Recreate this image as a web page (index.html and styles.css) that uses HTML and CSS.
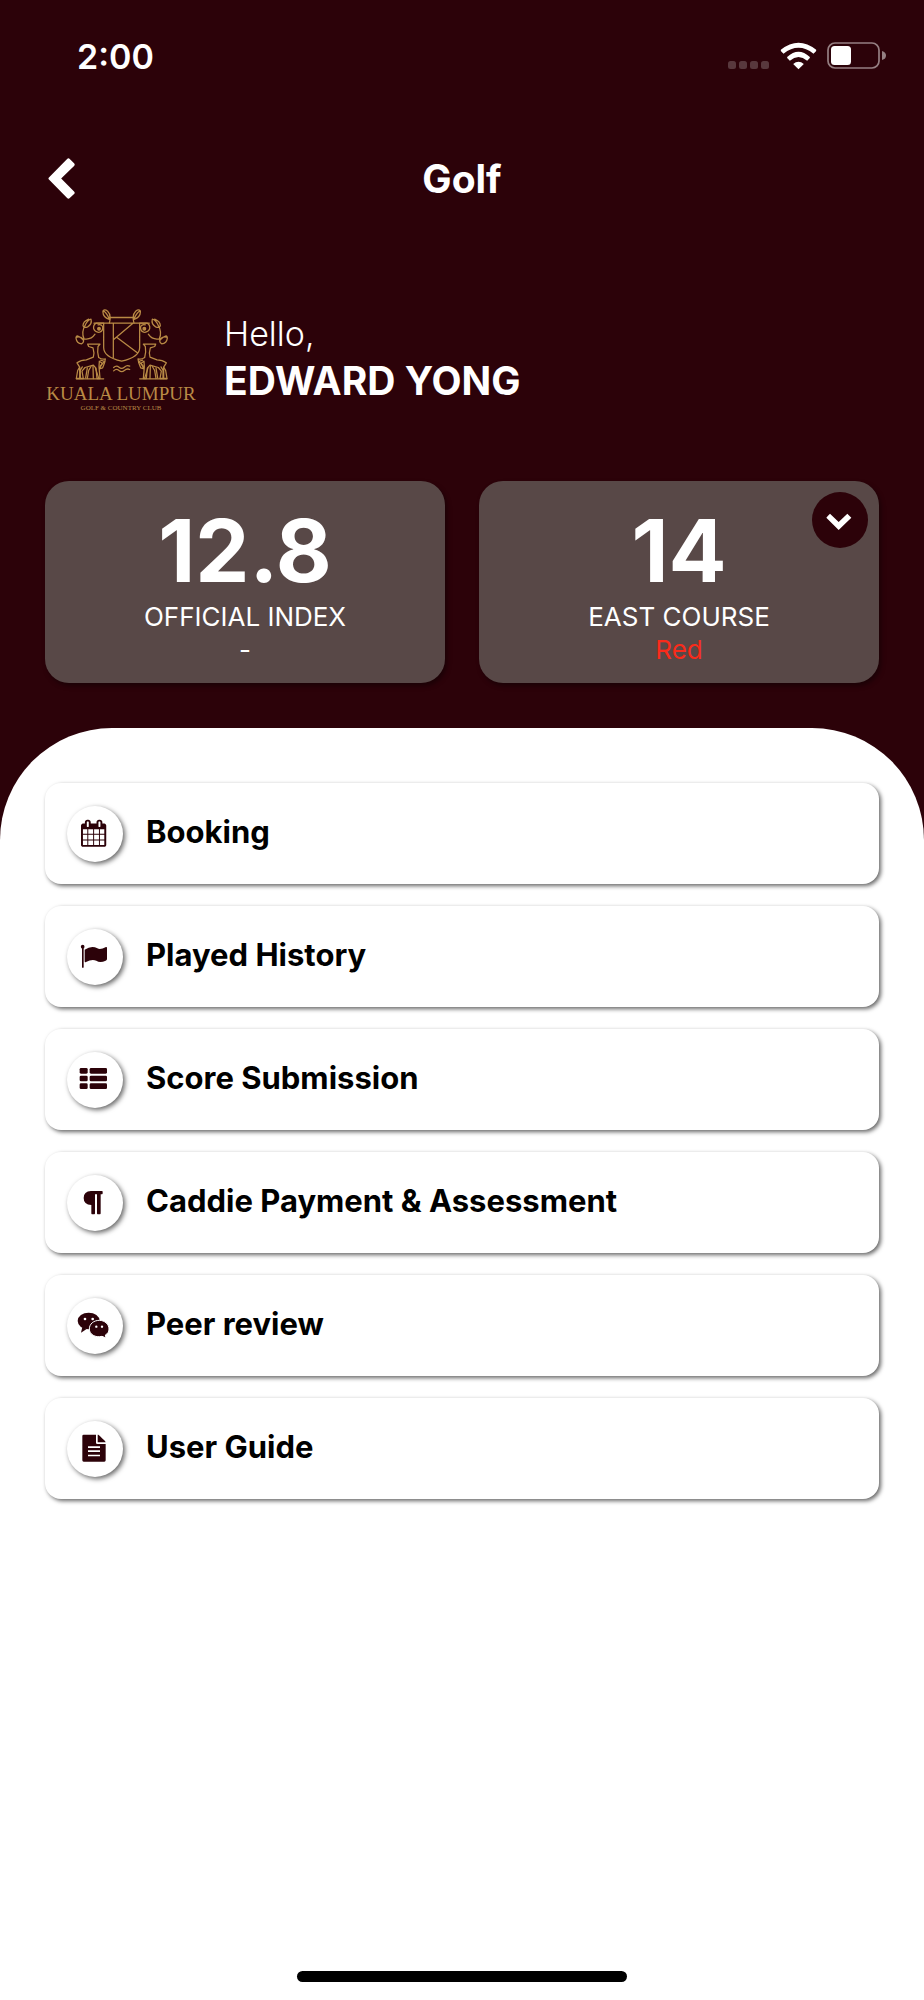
FILE: index.html
```html
<!DOCTYPE html>
<html lang="en">
<head>
<meta charset="utf-8">
<meta name="viewport" content="width=device-width, initial-scale=1">
<title>Golf</title>
<link rel="stylesheet" href="styles.css">
</head>
<body>
<header class="hero">
  <div class="status">
    <span class="status-time">2:00</span>
    <div class="status-icons">
      <svg class="icon-signal" viewBox="0 0 42 26" aria-hidden="true"><g fill="#58383d"><rect y="18" width="8" height="8" rx="2.500"/><rect x="11" y="18" width="8" height="8" rx="2.500"/><rect x="22" y="18" width="8" height="8" rx="2.500"/><rect x="33" y="18" width="8" height="8" rx="2.500"/></g></svg>
      <svg class="icon-wifi" viewBox="954 124 110 84" aria-hidden="true"><g fill="#fff"><path d="M956 147Q1009 105 1062 147V151L1054 159Q1009 124 964 159L956 151Z"/><path d="M975 169Q1009 138 1043 169V172L1035 180Q1009 158 983 180L975 172Z"/><path d="M993 190Q1009 176 1025 190L1009 206Z"/></g></svg>
      <svg class="icon-battery" viewBox="0 0 60 28" aria-hidden="true"><rect x="1" y="1" width="51" height="25" rx="7" fill="none" stroke="#957f82" stroke-width="1.700"/><rect x="4" y="4" width="20" height="19" rx="3.500" fill="#fff"/><path d="M55 9Q59 10 59 13.500T55 18Z" fill="#957f82"/></svg>
    </div>
  </div>
  <nav class="navbar">
    <button class="back" type="button" aria-label="Back"><svg viewBox="145 472 80 124" aria-hidden="true"><path d="M202 475Q206 471 210 475L223 488Q227 492 223 496L184 534L223 573Q227 577 223 581L210 593Q206 597 202 593L147 537Q144 534 147 531Z" fill="#fff"/></svg></button>
    <h1 class="title">Golf</h1>
  </nav>
  <section class="profile">
    <div class="logo">
      <svg class="crest" viewBox="130 58 285 215" aria-hidden="true">
        <g fill="none" stroke="#b98a45" stroke-width="3.800" stroke-linejoin="round" stroke-linecap="round">
          <path d="M219 103H327V176Q327 205 273 217Q219 205 219 176ZM248 103V206M306 104L249 152M258 145L320 192M190 103H219M327 103H356"/>
          <path d="M234 86H312"/>
          <path d="M249 236Q257 228 265 235T281 235T297 232M249 246Q257 238 265 245T281 245T297 242"/>
          <g id="supporter">
            <path d="M236 103Q243 78 231 67Q222 60 217 66Q215 84 236 92M218 66Q226 69 235 88"/>
            <path d="M219 103H197Q187 108 189 120Q194 132 207 130Q218 126 216 113Q211 105 202 108"/>
            <circle cx="205" cy="120" r="4" fill="#b98a45"/>
            <path d="M193 136Q181 154 160 150Q151 130 164 108Q171 93 181 91Q185 106 171 114Q160 119 157 111Q157 98 174 91M158 154Q136 132 136 148Q138 164 153 165Q161 159 158 151Q147 141 136 146"/>
            <path d="M171 166H208L202 173Q199 190 204 206Q214 213 224 210L222 221L216 237L206 240L215 223L206 217L205 234L208 269H199L196 238L188 229L163 236L154 247L158 269H137L141 245L147 235L139 222Q151 213 167 213L188 205Q192 192 187 177L174 173Z"/>
            <path d="M147 236V269M155 234L149 244V268M170 237L165 267M181 233L174 245L170 269M187 232L188 269M194 237L204 268M210 214L222 218L208 232"/>
            <path d="M137 270H219"/>
          </g>
          <use href="#supporter" transform="matrix(-1 0 0 1 546 0)"/>
        </g>
      </svg>
      <span class="logo-name">KUALA LUMPUR</span>
      <span class="logo-sub">GOLF &amp; COUNTRY CLUB</span>
    </div>
    <p class="greeting"><span class="hello">Hello,</span><strong class="member">EDWARD YONG</strong></p>
  </section>
  <section class="scores">
    <article class="score"><span class="value">12.8</span><span class="label">OFFICIAL INDEX</span><span class="label">-</span></article>
    <article class="score"><span class="value">14</span><span class="label">EAST COURSE</span><span class="label tee">Red</span>
      <button class="expand" type="button" aria-label="Choose course"><svg viewBox="1057 96 168 168" aria-hidden="true"><path d="M1105 167L1111 161L1137 186L1163 161L1175 173L1137 210L1100 173Z" fill="#fff"/></svg></button>
    </article>
  </section>
</header>
<main class="sheet">
  <nav class="menu" aria-label="Golf services">
    <a class="item" href="#booking"><span class="badge"><svg viewBox="112 107 168 168" aria-hidden="true"><path transform="translate(154 148) scale(.0455)" d="M128 1664h288v-288h-288v288zm352 0h320v-288h-320v288zm-352-352h288v-320h-288v320zm352 0h320v-320h-320v320zm-352-384h288v-288h-288v288zm736 736h320v-288h-320v288zm-384-736h320v-288h-320v288zm768 736h288v-288h-288v288zm-384-352h320v-320h-320v320zm-352-864v-288q0-13-9.500-22.500t-22.500-9.500h-64q-13 0-22.500 9.500t-9.500 22.500v288q0 13 9.500 22.500t22.500 9.500h64q13 0 22.500-9.500t9.500-22.500zm736 864h288v-320h-288v320zm-384-384h320v-288h-320v288zm384 0h288v-288h-288v288zm32-480v-288q0-13-9.500-22.500t-22.500-9.500h-64q-13 0-22.500 9.500t-9.500 22.500v288q0 13 9.500 22.500t22.500 9.500h64q13 0 22.500-9.500t9.500-22.500zm384-64v1280q0 52-38 90t-90 38h-1408q-52 0-90-38t-38-90v-1280q0-52 38-90t90-38h128v-96q0-66 47-113t113-47h64q66 0 113 47t47 113v96h384v-96q0-66 47-113t113-47h64q66 0 113 47t47 113v96h128q52 0 90 38t38 90z"/></svg></span><span class="item-text">Booking</span></a>
    <a class="item" href="#history"><span class="badge"><svg viewBox="112 475 168 168" aria-hidden="true"><circle cx="159" cy="528" r="5.500"/><path d="M157 530H162V590Q160 594 157 590ZM165 537Q186 523 203 533Q212 538 229 529Q232 528 232 532V565Q232 568 228 570Q211 578 200 570Q187 564 169 574Q165 576 165 572Z"/></svg></span><span class="item-text">Played History</span></a>
    <a class="item" href="#score"><span class="badge"><svg viewBox="112 94 168 168" aria-hidden="true"><rect x="150" y="142" width="24" height="17" rx="4"/><rect x="180" y="142" width="52" height="17" rx="4"/><rect x="150" y="165" width="24" height="17" rx="4"/><rect x="180" y="165" width="52" height="17" rx="4"/><rect x="150" y="188" width="24" height="17" rx="4"/><rect x="180" y="188" width="52" height="17" rx="4"/></svg></span><span class="item-text">Score Submission</span></a>
    <a class="item" href="#caddie"><span class="badge"><svg viewBox="112 462 168 168" aria-hidden="true"><path d="M184 510H217Q219 510 219 512V517Q219 520 217 520H213V577Q213 580 211 580H204Q202 580 202 577V520H196V577Q196 580 194 580H187Q185 580 185 577V552Q162 551 162 531Q162 511 184 510Z"/></svg></span><span class="item-text">Caddie Payment &amp; Assessment</span></a>
    <a class="item" href="#review"><span class="badge"><svg viewBox="112 80 168 168" aria-hidden="true"><ellipse cx="177" cy="149" rx="33" ry="25"/><path d="M158 167L154 184L171 173Z"/><g stroke="#fff" stroke-width="3"><path d="M209 147C225 147 238 159 238 173C238 182 234 187 227 191L229 200L217 195C197 200 179 189 179 173C179 158 192 147 209 147Z"/></g><g fill="#fff"><circle cx="166" cy="143" r="4"/><circle cx="189" cy="143" r="4"/><circle cx="200" cy="166" r="3.500"/><circle cx="217" cy="166" r="3.500"/></g></svg></span><span class="item-text">Peer review</span></a>
    <a class="item" href="#guide"><span class="badge"><svg viewBox="112 449 168 168" aria-hidden="true"><path fill-rule="evenodd" d="M162 490H199V514Q199 518 203 518H228V567Q228 571 224 571H162Q158 571 158 567V494Q158 490 162 490ZM175 525V530H211V525ZM175 537V542H211V537ZM175 550V555H211V550Z"/><path d="M204 490L206 490Q208 491 226 509L228 513H204Z"/></svg></span><span class="item-text">User Guide</span></a>
  </nav>
  <div class="home-indicator"></div>
</main>
</body>
</html>
```
FILE: styles.css
```css
* { box-sizing: border-box; }

body {
  margin: 0;
  min-height: 100vh;
  display: flex;
  flex-direction: column;
  background: #2c0209;
  color: #fff;
  font-family: Inter, "Liberation Sans", sans-serif;
}

svg { display: block; }
button { padding: 0; border: 0; background: none; cursor: pointer; }

.hero { padding: 32px 45px 45px; }

.status {
  display: flex;
  justify-content: space-between;
  align-items: center;
  height: 48px;
  padding-left: 32px;
}
.status-time { font-size: 34px; font-weight: 600; }
.status-icons { display: flex; align-items: center; gap: 10px; margin-right: -8px; }
.icon-signal { width: 42px; height: 26px; }
.icon-wifi { width: 37px; height: 28px; }
.icon-battery { width: 60px; height: 28px; }

.navbar {
  display: grid;
  grid-template-columns: 1fr auto 1fr;
  align-items: center;
  height: 60px;
  margin-top: 68px;
}
.back { justify-self: start; padding-left: 3px; }
.back svg { width: 27px; height: 41px; }
.title { margin: 0; padding-top: 2px; font-size: 39px; font-weight: 700; line-height: 58px; }

.profile {
  display: flex;
  align-items: center;
  gap: 27px;
  margin-top: 100px;
}
.logo {
  display: flex;
  flex-direction: column;
  align-items: center;
  width: 152px;
  color: #b98a45;
  font-family: "Liberation Serif", serif;
  white-space: nowrap;
}
.crest { width: 95px; height: 72px; }
.logo-name { margin-top: 4px; font-size: 19px; line-height: 20px; }
.logo-sub { font-size: 7px; line-height: 8px; }
.greeting { display: flex; flex-direction: column; margin: 0; padding-bottom: 4px; }
.hello { font-size: 34px; font-weight: 300; line-height: 46px; }
.member { font-size: 39px; font-weight: 700; line-height: 48px; }

.scores {
  display: grid;
  grid-template-columns: 1fr 1fr;
  gap: 34px;
  margin-top: 69px;
}
.score {
  position: relative;
  display: flex;
  flex-direction: column;
  align-items: center;
  padding: 22px 16px 17px;
  border-radius: 24px;
  background: #584847;
  box-shadow: 2px 3px 5px rgba(0, 0, 0, 0.4);
}
.value { font-size: 86px; font-weight: 700; line-height: 97px; }
.label { font-size: 26px; font-weight: 400; line-height: 33px; }
.tee { color: #f92b1b; }
.expand {
  position: absolute;
  top: 11px;
  right: 11px;
  width: 56px;
  height: 56px;
  border-radius: 50%;
  background: #2c0209;
}

.sheet {
  flex: 1;
  display: flex;
  flex-direction: column;
  padding: 55px 45px 18px;
  border-radius: 112px 112px 0 0;
  background: #fff;
}
.menu { display: flex; flex-direction: column; gap: 22px; }
.item {
  display: flex;
  align-items: center;
  gap: 23px;
  padding: 23px 22px 22px;
  border-radius: 16px;
  background: #fff;
  box-shadow: 2px 2px 4px rgba(0, 0, 0, 0.6);
  color: #000;
  font-size: 31px;
  font-weight: 700;
  line-height: 40px;
  text-decoration: none;
}
.item-text { padding-bottom: 4px; }
.badge {
  flex: none;
  width: 56px;
  height: 56px;
  border-radius: 50%;
  background: #fff;
  box-shadow: 2px 2px 5px rgba(0, 0, 0, 0.6);
  fill: #2c0209;
}
.home-indicator {
  width: 330px;
  max-width: 40%;
  height: 11px;
  margin: auto auto 0;
  border-radius: 6px;
  background: #000;
}
```
